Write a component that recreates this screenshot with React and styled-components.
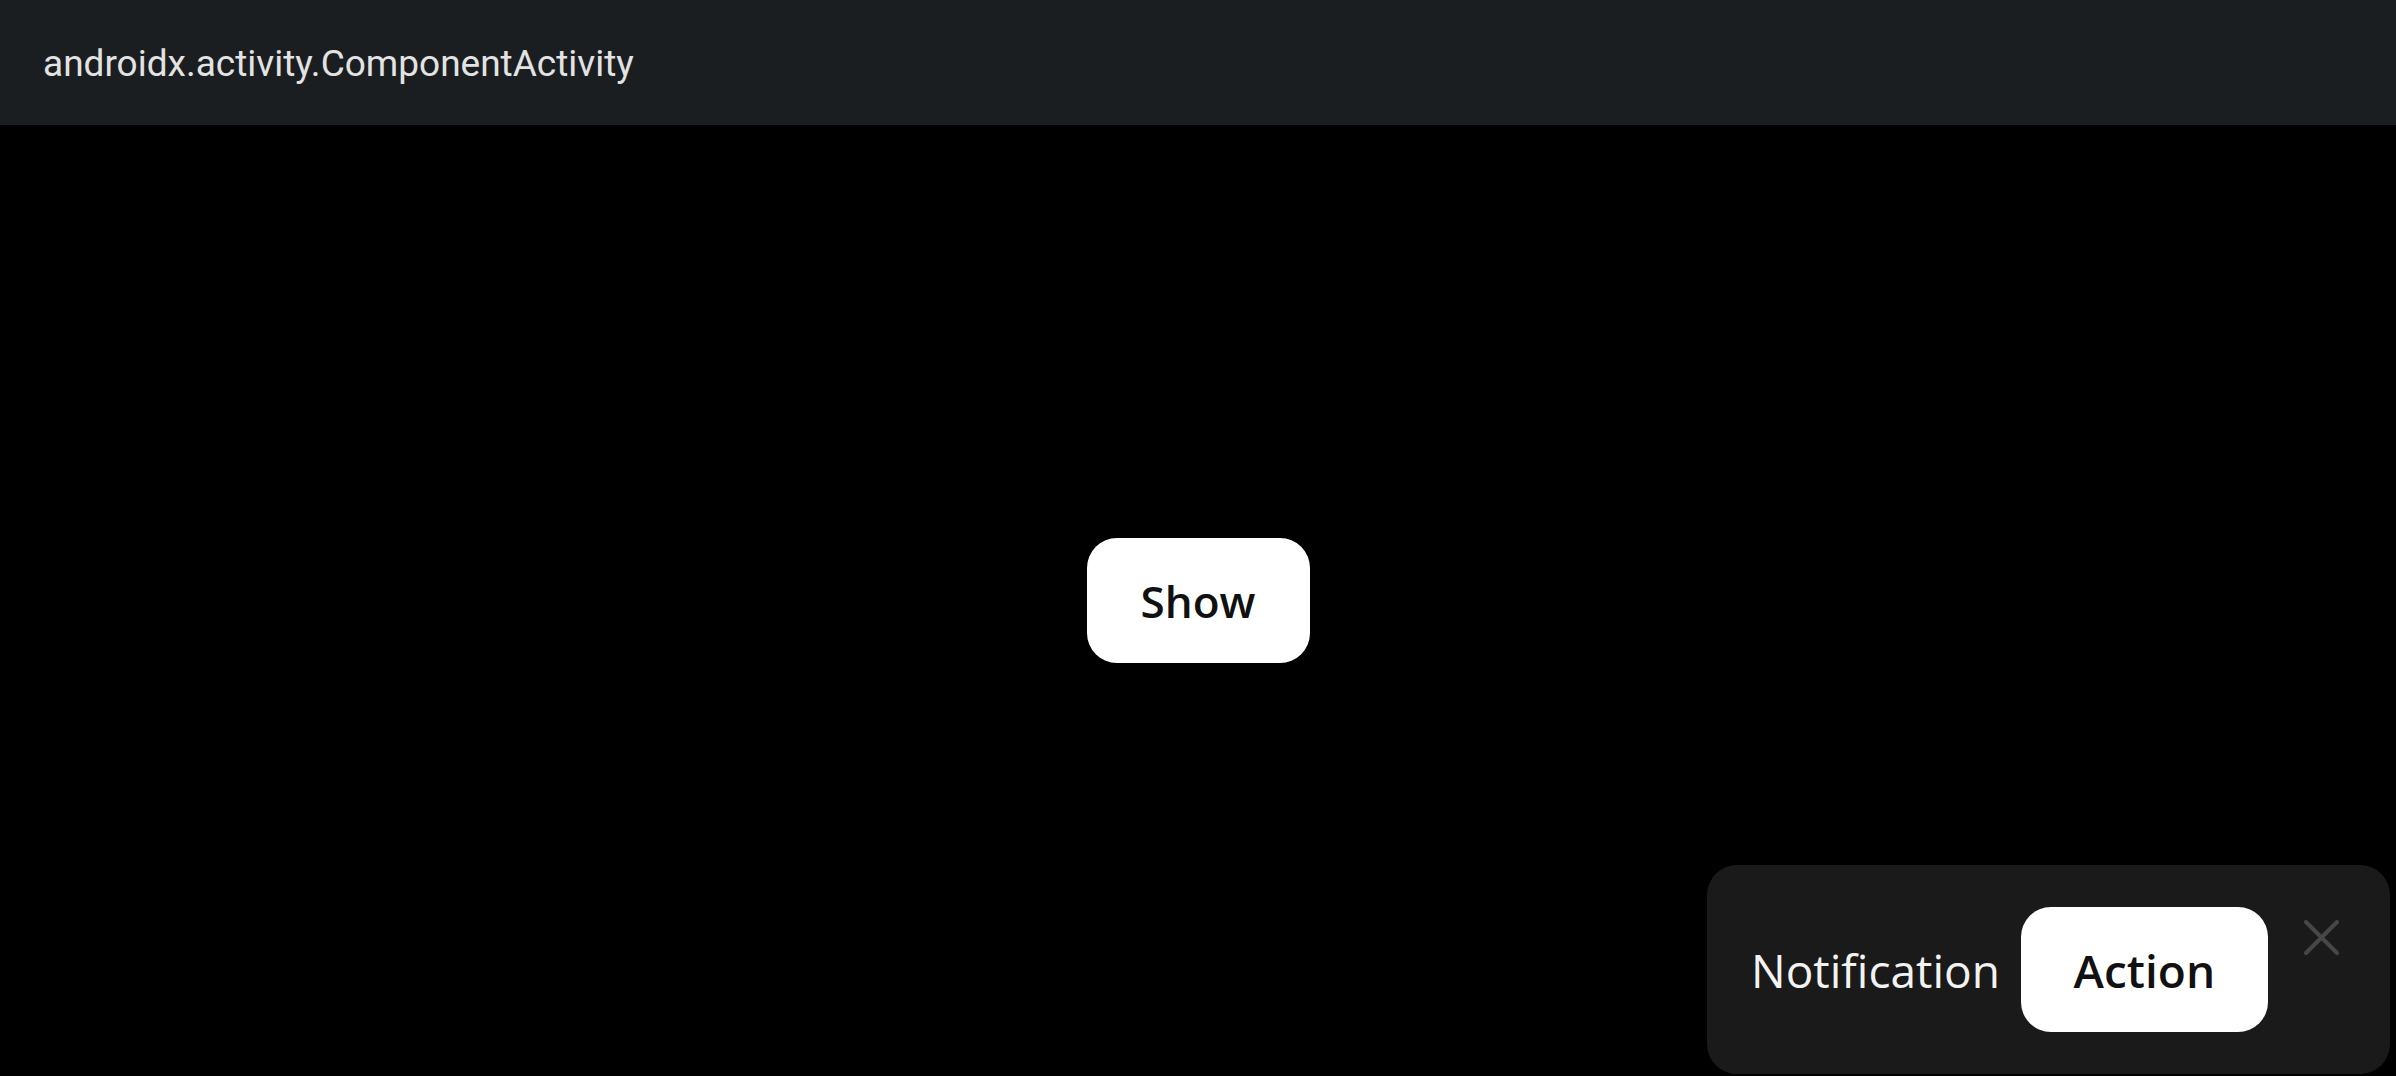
import React from "react";
import styled, { createGlobalStyle } from "styled-components";

const Global = createGlobalStyle`
  html, body { margin: 0; padding: 0; background: #000; }
  body { width: 2396px; height: 1076px; overflow: hidden; }
  #root { height: 100%; }
`;

const Window = styled.div`
  width: 2396px;
  height: 1076px;
  display: flex;
  flex-direction: column;
  background: #000;
  position: relative;
  overflow: hidden;
`;

const TitleBar = styled.header`
  height: 125px;
  flex: 0 0 auto;
  background: #1b1e21;
  display: flex;
  align-items: center;
  padding-left: 43px;
  box-sizing: border-box;
`;

const Title = styled.span`
  font-family: Roboto, "Liberation Sans", sans-serif;
  font-size: 37px;
  color: #e3e3e3;
  position: relative;
  top: 1px;
`;

const Content = styled.main`
  flex: 1;
  display: flex;
  align-items: center;
  justify-content: center;
`;

const PillButton = styled.button`
  height: 125px;
  width: ${(p) => p.$w}px;
  border: none;
  border-radius: 30px;
  background: #fff;
  color: #111;
  font-family: "Open Sans", "Noto Sans", sans-serif;
  font-weight: 600;
  font-size: ${(p) => p.$fs}px;
  display: flex;
  align-items: center;
  justify-content: center;
  padding: 0;
  cursor: pointer;
`;

const Toast = styled.div`
  position: absolute;
  left: 1707px;
  top: 865px;
  width: 683px;
  height: 209px;
  box-sizing: border-box;
  background: #1a1a1a;
  border-radius: 30px;
  display: flex;
  align-items: center;
  padding-left: 44px;
`;

const ToastText = styled.span`
  font-family: "Open Sans", "Noto Sans", sans-serif;
  font-size: 46px;
  color: #f2f2f2;
  margin-right: 21px;
`;

const Close = styled.button`
  align-self: flex-start;
  margin-top: 55px;
  margin-left: 36px;
  width: 35px;
  height: 35px;
  padding: 0;
  border: none;
  background: transparent;
  display: flex;
`;

export default function App() {
  return (
    <>
      <Global />
      <Window>
        <TitleBar>
          <Title>androidx.activity.ComponentActivity</Title>
        </TitleBar>
        <Content>
          <PillButton $w={223} $fs={44}>Show</PillButton>
        </Content>
        <Toast>
          <ToastText>Notification</ToastText>
          <PillButton $w={247} $fs={46}>Action</PillButton>
          <Close aria-label="close">
            <svg width="35" height="35" viewBox="0 0 35 35">
              <path d="M2 2 L33 33 M33 2 L2 33" stroke="#474747" strokeWidth="4" strokeLinecap="round" />
            </svg>
          </Close>
        </Toast>
      </Window>
    </>
  );
}
